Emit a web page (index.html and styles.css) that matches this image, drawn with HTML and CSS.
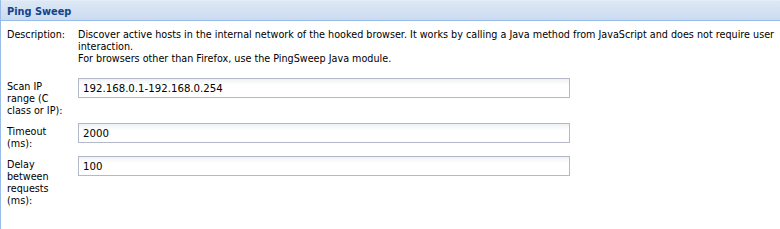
FILE: index.html
```html
<!DOCTYPE html>
<html lang="en">
<head>
    <meta charset="UTF-8">
    <title>Ping Sweep</title>
    <link rel="stylesheet" href="styles.css">
</head>
<body>
    <div class="panel">
        <div class="panel-header">
            <span class="panel-title">Ping Sweep</span>
        </div>
        <div class="panel-body">
            <div class="form-row desc-row">
                <label class="form-label">Description:</label>
                <div class="form-desc">
                    Discover active hosts in the internal network of the hooked browser. It works by calling a Java method from JavaScript and does not require user interaction.<br>
                    For browsers other than Firefox, use the PingSweep Java module.
                </div>
            </div>
            <div class="form-row">
                <label class="form-label" for="ipRange">Scan IP range (C class or IP):</label>
                <input class="form-input" id="ipRange" type="text" value="192.168.0.1-192.168.0.254">
            </div>
            <div class="form-row">
                <label class="form-label" for="timeout">Timeout (ms):</label>
                <input class="form-input" id="timeout" type="text" value="2000">
            </div>
            <div class="form-row">
                <label class="form-label" for="delay">Delay between requests (ms):</label>
                <input class="form-input" id="delay" type="text" value="100">
            </div>
        </div>
    </div>
</body>
</html>
```

FILE: styles.css
```css
:root {
    --border-blue: #99bbe8;
    --title-blue: #15428b;
    --field-border: #b5b8c8;
}

body {
    margin: 0;
    padding: 0;
    background: #ffffff;
    font-family: 'DejaVu Sans', Verdana, sans-serif;
    font-size: 9.65px;
    color: #000000;
}

.panel {
    height: 229px;
    border-left: 1px solid var(--border-blue);
    box-sizing: border-box;
}

.panel-header {
    height: 21px;
    box-sizing: border-box;
    padding: 1px 6px 0 6px;
    border-top: 1px solid #e4ecf7;
    border-bottom: 1px solid var(--border-blue);
    background: linear-gradient(#dde8f6, #cbdbf0);
    display: flex;
    align-items: center;
}

.panel-title {
    color: var(--title-blue);
    font-weight: bold;
    font-size: 9.8px;
}

.panel-body {
    padding: 8px 0 0 6px;
}

.form-row {
    display: flex;
    align-items: flex-start;
    margin-bottom: 6px;
}

.desc-row {
    margin-bottom: 13px;
}

.form-label {
    width: 57px;
    margin-right: 14px;
    padding-top: 3px;
    line-height: 12px;
    flex-shrink: 0;
}

.desc-row .form-label {
    padding-top: 0;
}

.form-desc {
    line-height: 12px;
    flex: 1;
}

.form-input {
    width: 492px;
    height: 20px;
    box-sizing: border-box;
    margin: 0;
    padding: 0 4px;
    border: 1px solid var(--field-border);
    background: linear-gradient(#eef1f4, #ffffff 6px);
    font-family: 'DejaVu Sans', Verdana, sans-serif;
    font-size: 10.2px;
    color: #000000;
    outline: none;
}
```
